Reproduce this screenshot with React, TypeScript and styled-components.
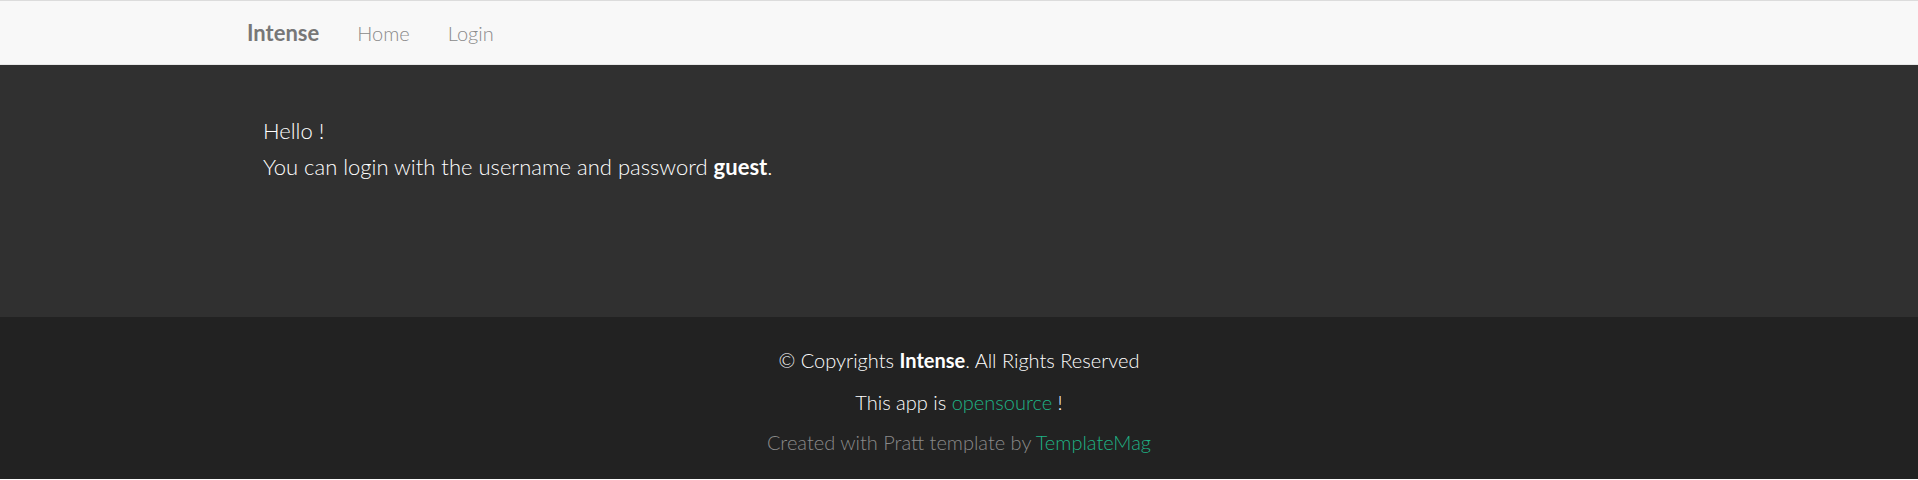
import React from "react"
import styled, { createGlobalStyle } from "styled-components"

const GlobalStyle = createGlobalStyle`
    html, body {
        margin: 0;
        padding: 0;
        background: #ffffff;
        font-family: "Lato Light", Lato, "Open Sans", sans-serif;
        font-weight: 300;
    }

    a {
        text-decoration: none;
    }
`

const Navbar = styled.nav`
    height: 63px;
    background: #f8f8f8;
    border-top: 1px solid #dcdcdc;
    border-bottom: 1px solid #e7e7e7;
`

const Container = styled.div`
    width: 1440px;
    margin: 0 auto;
    box-sizing: border-box;
`

const NavInner = styled(Container)`
    height: 100%;
    display: flex;
    align-items: center;
    padding-left: 8px;
    gap: 38px;
`

const Brand = styled.a`
    color: #777777;
    font-family: Lato, sans-serif;
    font-size: 22px;
    font-weight: 700;
`

const NavLink = styled.a`
    color: #8a8a8a;
    font-size: 20px;
`

const Main = styled.section`
    height: 252px;
    background: #303030;
    color: #ffffff;
    box-sizing: border-box;
    padding-top: 48px;
`

const Content = styled(Container)`
    padding-left: 24px;
    font-size: 22px;
    line-height: 36px;

    b {
        font-family: Lato, sans-serif;
        font-weight: 700;
    }
`

const Footer = styled.footer`
    height: 162px;
    background: #222222;
    box-sizing: border-box;
    padding-top: 25px;
    text-align: center;
    font-size: 20px;
`

const FooterLine = styled.p<{ $muted?: boolean }>`
    margin: 0 0 ${(p) => (p.$muted ? 0 : 6)}px;
    line-height: ${(p) => (p.$muted ? 32 : 36)}px;
    color: ${(p) => (p.$muted ? "#8a8a8a" : "#ffffff")};

    b {
        font-family: Lato, sans-serif;
        font-weight: 700;
    }
`

const Accent = styled.a`
    color: #1fb285;
`

const App: React.FC = () => {
    return (
        <>
            <GlobalStyle />
            <Navbar>
                <NavInner>
                    <Brand href="#">Intense</Brand>
                    <NavLink href="#">Home</NavLink>
                    <NavLink href="#">Login</NavLink>
                </NavInner>
            </Navbar>
            <Main>
                <Content>
                    Hello !
                    <br />
                    You can login with the username and password <b>guest</b>.
                </Content>
            </Main>
            <Footer>
                <FooterLine>
                    © Copyrights <b>Intense</b>. All Rights Reserved
                </FooterLine>
                <FooterLine>
                    This app is <Accent href="#">opensource</Accent> !
                </FooterLine>
                <FooterLine $muted>
                    Created with Pratt template by <Accent href="#">TemplateMag</Accent>
                </FooterLine>
            </Footer>
        </>
    )
}

export default App
